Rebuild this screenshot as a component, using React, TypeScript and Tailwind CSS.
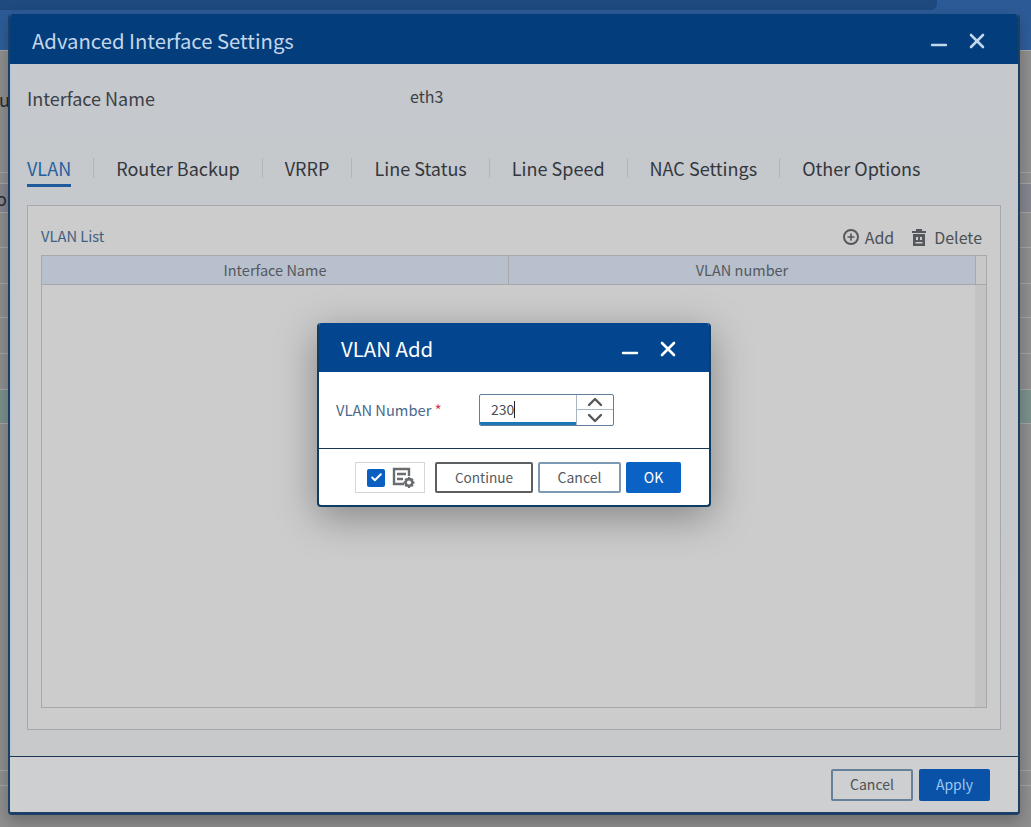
import { Plus, Minus, X, ChevronUp, ChevronDown, Check } from "lucide-react";

const tabs = ["Router Backup", "VRRP", "Line Status", "Line Speed", "NAC Settings", "Other Options"];

function WindowButtons() {
  return (
    <div className="flex items-center gap-[14px]">
      <Minus className="mt-[9px] h-[24px] w-[24px]" strokeWidth={2.4} />
      <X className="h-[24px] w-[24px]" strokeWidth={2.6} />
    </div>
  );
}

function AddIcon() {
  return (
    <span className="flex h-[16px] w-[16px] items-center justify-center rounded-full border-[2.5px] border-[#55585c]">
      <Plus className="h-[10px] w-[10px] text-[#55585c]" strokeWidth={4} />
    </span>
  );
}

function TrashIcon() {
  return (
    <svg width="16" height="17" viewBox="0 0 16 17" fill="#55585c">
      <rect x="5" y="0" width="6" height="2" />
      <rect x="1" y="2" width="14" height="2" />
      <path d="M2 5h12v12H2zM5 8v3h2V8zM9 8v3h2V8zM4.5 13v1.5h7V13z" fillRule="evenodd" />
    </svg>
  );
}

function SettingsIcon() {
  return (
    <svg width="24" height="22" viewBox="0 0 24 22" fill="none">
      <path d="M12 17H2V2h15v7" stroke="#6a6d70" strokeWidth="2.4" />
      <path d="M5 7h9M5 12h6" stroke="#6a6d70" strokeWidth="2.4" />
      <circle cx="17" cy="15.5" r="3.4" stroke="#6a6d70" strokeWidth="2.6" />
      <path d="M17 10v2M17 19v2M11.5 15.5h2M20.5 15.5h2M13.2 11.7l1.4 1.4M19.4 17.9l1.4 1.4M13.2 19.3l1.4-1.4M19.4 13.1l1.4-1.4" stroke="#6a6d70" strokeWidth="2.2" />
    </svg>
  );
}

export default function App() {
  return (
    <div className="relative h-[827px] w-[1031px] overflow-hidden bg-[#8f8f8f] font-['Noto_Sans_CJK_KR','Noto_Sans',sans-serif]">
      {/* page behind the dialogs */}
      <div className="h-[50px] bg-gradient-to-b from-[#2c5a96] to-[#2f5f9c]">
        <div className="h-[10px] w-[937px] rounded-br-[6px] bg-[#1f4a7f]" />
      </div>
      <div className="flex flex-col text-[18px] text-[#2b2d30]">
        <div className="h-[122px] border-t border-[#a8a8a8] pt-[35px] leading-[26px]">
          <span className="-ml-[1px]">ur</span>
        </div>
        <div className="h-[11px] border-t border-[#a5a5a5]" />
        <div className="h-[29px] border-t border-[#a5a5a5] bg-[#85868f] pt-[1px] leading-[26px]">
          <span className="-ml-[4px]">o</span>
        </div>
        <div className="h-[35px] border-t border-[#a5a5a5]" />
        <div className="h-[36px] border-t border-[#a5a5a5]" />
        <div className="h-[34px] border-t border-[#a5a5a5]" />
        <div className="h-[36px] border-t border-[#a5a5a5]" />
        <div className="h-[36px] border-t border-[#a5a5a5]" />
        <div className="h-[34px] border-t border-[#a5a5a5] bg-[#7c918c]" />
        <div className="h-[347px] border-t border-[#a5a5a5]" />
        <div className="h-[15px] border-t border-[#a5a5a5]" />
        <div className="border-t border-[#a5a5a5]" />
      </div>

      {/* main dialog */}
      <div className="absolute left-[8px] top-[14px] flex h-[801px] w-[1012px] flex-col overflow-hidden rounded-[4px] border-b-[3px] border-l-2 border-r-2 border-[#1c3f66] bg-[#cbcccd] shadow-[0_6px_16px_rgba(0,0,0,0.25)]">
        <div className="-mx-[2px] flex h-[50px] shrink-0 items-center justify-between bg-[#033d7c] pl-[24px] pr-[31px] pt-[3px] text-[#c3d7ea]">
          <span className="text-[20.3px]">Advanced Interface Settings</span>
          <WindowButtons />
        </div>
        <div className="flex min-h-0 flex-1 flex-col border-l-2 border-[#b9c8d8] bg-gradient-to-b from-[#c5c8cc] to-[#c7c9cb] pl-[15px] pr-[17px]">
          <div className="flex h-[71px] shrink-0 items-center">
            <span className="mb-[2px] w-[383px] text-[18px] text-[#3c4046]">Interface Name</span>
            <span className="mb-[8px] text-[16px] text-[#3c4046]">eth3</span>
          </div>
          <div className="mt-[20px] flex h-[50px] shrink-0 items-start text-[18.03px] text-[#33373d]">
            <span className="border-b-[3px] border-[#1f5a9c] pb-[3px] leading-[26px] text-[#265f9f]">VLAN</span>
            {tabs.map((t) => (
              <span key={t} className="flex items-center">
                <span className="mx-[22px] h-[20px] border-l border-[#b3b6b9]" />
                <span className="leading-[26px]">{t}</span>
              </span>
            ))}
          </div>
          <div className="flex h-[525px] shrink-0 flex-col border border-[#a6a8ab] bg-[#cccccc] px-[13px] pb-[21px]">
            <div className="flex h-[49px] shrink-0 items-center justify-between pr-[5px] pt-[13px] text-[#4d5156]">
              <span className="mb-[2px] text-[14.7px] text-[#3f5f83]">VLAN List</span>
              <div className="flex items-center gap-[17px] text-[16px]">
                <span className="flex items-center gap-[6px]"><AddIcon />Add</span>
                <span className="flex items-center gap-[7px]"><TrashIcon />Delete</span>
              </div>
            </div>
            <div className="flex min-h-0 flex-1 flex-col border border-[#a6a8ab]">
              <div className="flex h-[29px] shrink-0 border-b border-[#a6a8ab] text-[14.5px] text-[#55595f]">
                <div className="flex w-[467px] items-center justify-center border-r border-[#a6a8ab] bg-[#b7c0cc]">Interface Name</div>
                <div className="flex w-[466px] items-center justify-center bg-[#b7c0cc]">VLAN number</div>
                <div className="flex-1 border-l border-[#a6a8ab] bg-[#c8c8c8]" />
              </div>
              <div className="flex min-h-0 flex-1 justify-end">
                <div className="w-[11px] bg-[#c3c3c3]" />
              </div>
            </div>
          </div>
        </div>
        <div className="flex h-[56px] shrink-0 items-center justify-end gap-[6px] border-t border-[#1c3553] bg-[#cdcfd0] pr-[28px] text-[14px]">
          <button className="h-[32px] w-[82px] rounded-[2px] border-2 border-[#668099] text-[#4d5156]">Cancel</button>
          <button className="h-[32px] w-[71px] rounded-[2px] bg-[#0a52a8] text-[#9cc7f2]">Apply</button>
        </div>
      </div>

      {/* VLAN add dialog */}
      <div className="absolute left-[317px] top-[323px] flex h-[184px] w-[394px] flex-col overflow-hidden rounded-[4px] border-2 border-t-0 border-[#0f3d68] bg-white shadow-[0_10px_40px_rgba(0,0,0,0.35)]">
        <div className="flex h-[49px] shrink-0 items-center justify-between bg-[#03468f] pl-[22px] pr-[29px] pt-[2px] text-white">
          <span className="text-[20.4px]">VLAN Add</span>
          <WindowButtons />
        </div>
        <div className="flex h-[77px] shrink-0 items-center border-b border-[#1c3553] pl-[17px]">
          <span className="w-[143px] text-[14.7px] text-[#4a6a8c]">VLAN Number <span className="text-[#d8344a]">*</span></span>
          <div className="flex h-[32px] w-[135px] overflow-hidden rounded-[2px] border border-[#5f7f9c]">
            <div className="flex w-[96px] items-center border-b-[3px] border-[#1d76b6] pl-[11px] pt-[2px] text-[14px] text-[#4a4d52]">
              230<span className="h-[17px] border-l border-[#222]" />
            </div>
            <div className="flex flex-1 flex-col border-l border-[#a9b6c2] text-[#55585c]">
              <div className="flex h-[15px] items-center justify-center border-b border-[#a9b6c2]"><ChevronUp className="h-[24px] w-[24px] shrink-0" strokeWidth={2.4} /></div>
              <div className="flex h-[15px] items-center justify-center"><ChevronDown className="h-[24px] w-[24px] shrink-0" strokeWidth={2.4} /></div>
            </div>
          </div>
        </div>
        <div className="flex flex-1 items-center justify-end pr-[28px] pt-[1px] text-[14px]">
          <div className="mr-[10px] flex h-[31px] w-[70px] items-center gap-[7px] border border-[#d5d6d8] pl-[11px]">
            <span className="flex h-[18px] w-[18px] items-center justify-center rounded-[2px] bg-[#0b5fc0]"><Check className="h-[13px] w-[13px] text-white" strokeWidth={3.5} /></span>
            <SettingsIcon />
          </div>
          <button className="mr-[5px] h-[31px] w-[98px] rounded-[2px] border-2 border-[#5d6063] text-[13.6px] text-[#55595f]">Continue</button>
          <button className="mr-[5px] h-[31px] w-[83px] rounded-[2px] border-2 border-[#7d99b3] text-[#55595f]">Cancel</button>
          <button className="h-[31px] w-[55px] rounded-[2px] bg-[#0a62c4] text-white">OK</button>
        </div>
      </div>
    </div>
  );
}
